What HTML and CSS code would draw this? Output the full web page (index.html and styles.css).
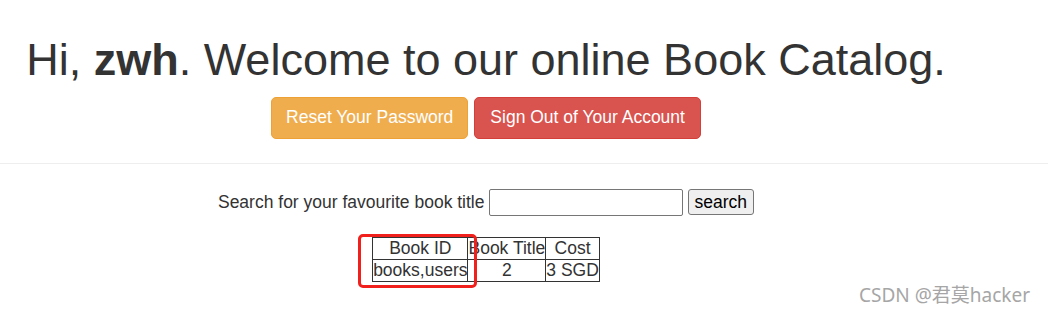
FILE: index.html
```html
<!DOCTYPE html>
<html>
<head>
	<title>Book Catalog</title>
	<link rel="stylesheet" href="styles.css">
</head>
<body>
	<div class="page">
		<h1 class="welcome">Hi, <b>zwh</b>. Welcome to our online Book Catalog.</h1>
		<div class="actions">
			<a class="btn btn-warning" href="#">Reset Your Password</a>
			<a class="btn btn-danger" href="#">Sign Out of Your Account</a>
		</div>
	</div>
	<hr class="divider">
	<div class="page">
		<form class="search-form">
			<label for="title">Search for your favourite book title</label>
			<input type="text" id="title" class="search-input">
			<button type="button" class="search-btn">search</button>
		</form>
		<div class="results">
			<table class="book-table">
				<tr>
					<th>Book ID</th>
					<th>Book Title</th>
					<th>Cost</th>
				</tr>
				<tr>
					<td>books,users</td>
					<td>2</td>
					<td>3 SGD</td>
				</tr>
			</table>
		</div>
	</div>
	<div class="mark"></div>
	<div class="watermark">CSDN @君莫hacker</div>
</body>
</html>
```

FILE: styles.css
```css
body {
	font-family: "Liberation Sans", Arial, sans-serif;
	font-size: 17.5px;
	color: #333;
	margin: 0;
	padding: 0;
	background-color: #fff;
}
.page {
	width: 972px;
	text-align: center;
}
.welcome {
	font-size: 45px;
	font-weight: normal;
	line-height: 1.1;
	margin: 35px 0 12px;
}
.welcome b {
	font-weight: bold;
}
.actions {
	display: flex;
	justify-content: center;
	gap: 6px;
}
.btn {
	display: inline-block;
	padding: 7.5px 15px;
	line-height: 25px;
	color: #fff;
	text-decoration: none;
	border: 1px solid transparent;
	border-radius: 5px;
}
.btn-warning {
	padding: 7.5px 14px;
	background-color: #f0ad4e;
	border-color: #eea236;
}
.btn-danger {
	background-color: #d9534f;
	border-color: #d43f3a;
}
.divider {
	border: 0;
	border-top: 1px solid #eee;
	margin: 24px 0 25px;
}
.search-form {
	display: flex;
	justify-content: center;
	align-items: center;
	gap: 5px;
	margin: 0;
}
.search-form label {
	margin-right: -1px;
}
.search-input {
	width: 194px;
	height: 27px;
	box-sizing: border-box;
	border: 1px solid #767676;
	border-radius: 2px;
	font-size: 17.5px;
	padding: 1px 2px;
}
.search-btn {
	font-family: "Liberation Sans", Arial, sans-serif;
	font-size: 17.5px;
	height: 26px;
	padding: 0 6px;
	line-height: 22px;
	background-color: #efefef;
	border: 1px solid #767676;
	border-radius: 3px;
	color: #000;
}
.results {
	display: flex;
	justify-content: center;
	margin-top: 21px;
}
.book-table {
	border-collapse: collapse;
	border: 1px solid #333;
}
.book-table th,
.book-table td {
	border: 1px solid #333;
	padding: 0;
	font-weight: normal;
	line-height: 21px;
	text-align: center;
}
/* red annotation box drawn over the first column */
.mark {
	position: absolute;
	left: 358px;
	top: 234px;
	width: 113px;
	height: 48px;
	border: 3px solid #f2201c;
	border-radius: 5px;
}
.watermark {
	position: absolute;
	left: 859px;
	top: 280px;
	font-family: "Noto Sans", "Noto Sans CJK SC", sans-serif;
	font-size: 19px;
	color: #a6a6a6;
	text-shadow: 0 0 1px #fff;
}
```
